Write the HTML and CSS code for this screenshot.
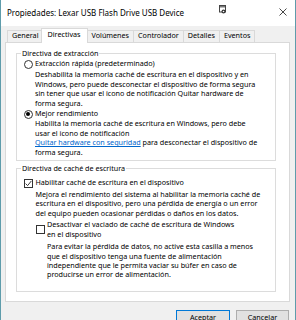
FILE: index.html
```html
<!DOCTYPE html>
<html lang="es">
<head>
<meta charset="utf-8">
<title>Propiedades</title>
<link rel="stylesheet" href="styles.css">
</head>
<body>
<div class="window">
  <div class="titlebar">
    <span class="title">Propiedades: Lexar USB Flash Drive USB Device</span>
    <svg class="ticon" width="7" height="9" viewBox="0 0 7 9">
      <rect x="0.5" y="0.5" width="6" height="6.5" fill="#fff" stroke="#444"/>
      <rect x="1" y="1" width="5" height="1.5" fill="#777"/>
      <circle cx="4.5" cy="6.5" r="2" fill="#333"/>
      <circle cx="4.5" cy="6.5" r="0.8" fill="#fff"/>
    </svg>
    <svg class="close" width="8" height="8" viewBox="0 0 8 8">
      <path d="M0.5 0.5 L7.5 7.5 M7.5 0.5 L0.5 7.5" stroke="#333" stroke-width="0.9" fill="none"/>
    </svg>
  </div>
  <div class="main">
    <div class="tabs">
      <div class="tab">General</div>
      <div class="tab active">Directivas</div>
      <div class="tab">Volúmenes</div>
      <div class="tab">Controlador</div>
      <div class="tab">Detalles</div>
      <div class="tab">Eventos</div>
    </div>
    <div class="panel">
      <fieldset class="group g1">
        <legend>Directiva de extracción</legend>
        <div class="inner">
          <div class="opt">
            <span class="radio"></span>
            <span>Extracción rápida (predeterminado)</span>
          </div>
          <p class="desc d1">Deshabilita la memoria caché de escritura en el dispositivo y en<br>Windows, pero puede desconectar el dispositivo de forma segura<br>sin tener que usar el icono de notificación Quitar hardware de<br>forma segura.</p>
          <div class="opt opt2">
            <span class="radio checked"></span>
            <span>Mejor rendimiento</span>
          </div>
          <p class="desc d2">Habilita la memoria caché de escritura en Windows, pero debe<br>usar el icono de notificación<br><a class="link" href="#">Quitar hardware con seguridad</a> para desconectar el dispositivo de<br>forma segura.</p>
        </div>
      </fieldset>
      <fieldset class="group g2">
        <legend>Directiva de caché de escritura</legend>
        <div class="inner">
          <div class="opt">
            <span class="check checked">
              <svg width="7" height="7" viewBox="0 0 7 7"><path d="M0.6 3.6 L2.6 5.6 L6.4 0.9" stroke="#222" stroke-width="0.9" fill="none"/></svg>
            </span>
            <span>Habilitar caché de escritura en el dispositivo</span>
          </div>
          <p class="desc d3">Mejora el rendimiento del sistema al habilitar la memoria caché de<br>escritura en el dispositivo, pero una pérdida de energía o un error<br>del equipo pueden ocasionar pérdidas o daños en los datos.</p>
          <div class="sub">
            <div class="opt top">
              <span class="check cb2"></span>
              <span>Desactivar el vaciado de caché de escritura de Windows<br>en el dispositivo</span>
            </div>
            <p class="desc d4">Para evitar la pérdida de datos, no active esta casilla a menos<br>que el dispositivo tenga una fuente de alimentación<br>independiente que le permita vaciar su búfer en caso de<br>producirse un error de alimentación.</p>
          </div>
        </div>
      </fieldset>
    </div>
    <div class="buttons">
      <button class="btn default">Aceptar</button>
      <button class="btn">Cancelar</button>
    </div>
  </div>
</div>
</body>
</html>
```

FILE: styles.css
```css
html, body {
  margin: 0;
  padding: 0;
}
body {
  width: 296px;
  height: 320px;
  overflow: hidden;
  background: #f0f0f0;
  font-family: "Noto Sans", "DejaVu Sans", sans-serif;
  font-size: 7.2px;
  line-height: 9.5px;
  color: #000;
}
.window {
  box-sizing: border-box;
  height: 320px;
  border-left: 1px solid #5e9cab;
  border-right: 1px solid #5e9cab;
  display: flex;
  flex-direction: column;
}
.titlebar {
  height: 26px;
  flex: none;
  background: #fff;
  display: flex;
  align-items: center;
  padding-left: 6px;
}
.title {
  flex: 1;
  font-size: 8px;
  white-space: nowrap;
  margin-bottom: 1px;
}
.ticon {
  flex: none;
  margin-right: 53px;
  margin-bottom: 7px;
}
.close {
  flex: none;
  margin-right: 8px;
  margin-bottom: 3px;
}
.main {
  flex: 1;
  padding: 2px 5px 0 4px;
}
.tabs {
  display: flex;
  align-items: flex-end;
  height: 15px;
  margin-left: 2px;
  margin-bottom: -1px;
  position: relative;
  z-index: 1;
}
.tab {
  box-sizing: border-box;
  height: 12px;
  margin-bottom: 1px;
  padding: 0 4px;
  border: 1px solid #d9d9d9;
  border-bottom: none;
  margin-right: -1px;
  background: #f0f0f0;
  white-space: nowrap;
  line-height: 9.5px;
}
.tab.active {
  height: 15px;
  margin: 0 -2px 0 -2px;
  padding: 0.5px 6px 0;
  background: #fff;
  position: relative;
  z-index: 2;
}
.tab.active + .tab {
  margin-left: 1px;
}
.panel {
  box-sizing: border-box;
  height: 260px;
  background: #fff;
  border: 1px solid #d9d9d9;
  padding: 5.5px 13px 0 10px;
}
.group {
  margin: 0;
  padding: 0;
  min-width: 0;
  border: 1px solid #dcdcdc;
}
.group legend {
  padding: 0 1px;
  margin-left: 4px;
  line-height: 9.5px;
}
.g1 .inner {
  padding: 1.25px 0 2.5px 6.5px;
}
.g2 {
  margin-top: 3px;
}
.g2 .inner {
  padding: 5.2px 0 11.5px 6.5px;
}
.opt {
  display: flex;
  align-items: center;
  white-space: nowrap;
}
.opt.top {
  align-items: flex-start;
}
.radio {
  box-sizing: border-box;
  width: 9px;
  height: 9px;
  border: 1px solid #333;
  border-radius: 50%;
  background: #fff;
  margin-right: 2.5px;
  display: flex;
  align-items: center;
  justify-content: center;
  flex: none;
}
.radio.checked::after {
  content: "";
  width: 4px;
  height: 4px;
  border-radius: 50%;
  background: #000;
}
.check {
  box-sizing: border-box;
  width: 9px;
  height: 9px;
  border: 1px solid #333;
  background: #fff;
  margin-right: 3px;
  display: flex;
  align-items: center;
  justify-content: center;
  flex: none;
}
.check svg {
  display: block;
}
.cb2 {
  margin-top: 5px;
  margin-right: 2.5px;
}
.desc {
  margin: 0;
  white-space: nowrap;
}
.d1 {
  padding-left: 11.5px;
  margin-top: 1.5px;
}
.opt2 {
  margin-top: 1px;
}
.d2 {
  padding-left: 11.5px;
  margin-top: 0.5px;
}
.link {
  color: #0066cc;
  text-decoration: underline;
}
.d3 {
  padding-left: 12px;
  margin-top: 2px;
}
.sub {
  margin-left: 12px;
  margin-top: 2px;
}
.d4 {
  padding-left: 11.5px;
  margin-top: 3px;
  line-height: 9.3px;
}
.buttons {
  display: flex;
  justify-content: flex-end;
  gap: 6px;
  margin-top: 8px;
  margin-right: 1px;
}
.btn {
  box-sizing: border-box;
  height: 15px;
  padding: 0;
  border: 1px solid #adadad;
  background: #e1e1e1;
  font-family: inherit;
  font-size: 7.2px;
  line-height: 9.5px;
  color: #000;
}
.btn.default {
  width: 54px;
  border-color: #0078d7;
}
.btn:not(.default) {
  width: 53px;
}
```
